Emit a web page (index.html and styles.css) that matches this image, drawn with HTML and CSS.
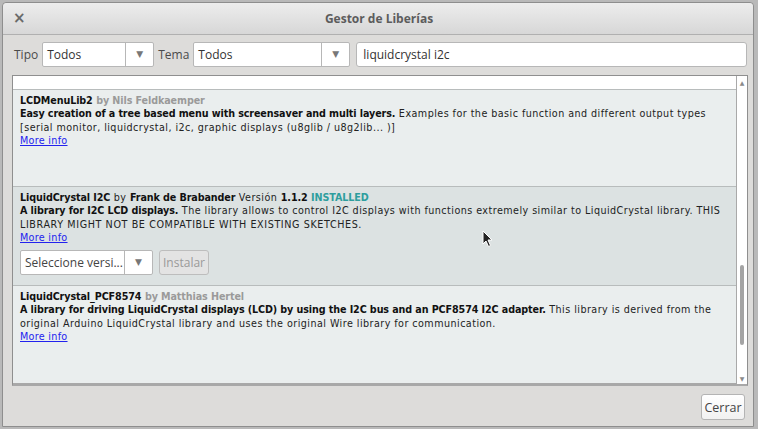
FILE: index.html
```html
<!DOCTYPE html>
<html lang="es">
<head>
<meta charset="utf-8">
<title>Gestor de Liberías</title>
<link rel="stylesheet" href="styles.css">
</head>
<body>
<div class="window">
  <div class="titlebar">
    <span class="close">×</span>
    <span class="title">Gestor de Liberías</span>
  </div>
  <div class="filters">
    <span class="label">Tipo</span>
    <div class="combo combo-tipo"><span class="combo-text">Todos</span><span class="combo-arrow">▼</span></div>
    <span class="label">Tema</span>
    <div class="combo combo-tema"><span class="combo-text">Todos</span><span class="combo-arrow">▼</span></div>
    <div class="search">liquidcrystal i2c</div>
  </div>
  <div class="panel">
    <div class="items">
      <div class="item item-partial"></div>
      <div class="item">
        <div class="line"><b>LCDMenuLib2</b> <b class="muted">by Nils Feldkaemper</b></div>
        <div class="line"><b>Easy creation of a tree based menu with screensaver and multi layers.</b> Examples for the basic function and different output types</div>
        <div class="line">[serial monitor, liquidcrystal, i2c, graphic displays (u8glib / u8g2lib... )]</div>
        <div class="line"><a class="more" href="#">More info</a></div>
      </div>
      <div class="item item-selected">
        <div class="line"><b>LiquidCrystal I2C</b> by <b>Frank de Brabander</b> Versión <b>1.1.2</b> <b class="installed">INSTALLED</b></div>
        <div class="line"><b>A library for I2C LCD displays.</b> The library allows to control I2C displays with functions extremely similar to LiquidCrystal library. THIS</div>
        <div class="line line-caps">LIBRARY MIGHT NOT BE COMPATIBLE WITH EXISTING SKETCHES.</div>
        <div class="line"><a class="more" href="#">More info</a></div>
        <div class="actions">
          <div class="combo combo-version"><span class="combo-text">Seleccione versi...</span><span class="combo-arrow">▼</span></div>
          <div class="btn btn-disabled">Instalar</div>
        </div>
      </div>
      <div class="item item-last">
        <div class="line"><b>LiquidCrystal_PCF8574</b> <b class="muted">by Matthias Hertel</b></div>
        <div class="line"><b>A library for driving LiquidCrystal displays (LCD) by using the I2C bus and an PCF8574 I2C adapter.</b> This library is derived from the</div>
        <div class="line">original Arduino LiquidCrystal library and uses the original Wire library for communication.</div>
        <div class="line"><a class="more" href="#">More info</a></div>
      </div>
    </div>
    <div class="scrollbar">
      <span class="sb-arrow">▲</span>
      <div class="sb-track"><div class="sb-thumb"></div></div>
      <span class="sb-arrow">▼</span>
    </div>
    <svg class="cursor" width="12" height="18" viewBox="0 0 12 18"><path d="M1 1 L1 14 L4 11 L6.5 16.5 L8.5 15.5 L6 10 L10 10 Z" fill="#222" stroke="#fff" stroke-width="1"/></svg>
  </div>
  <div class="footer">
    <div class="btn btn-close">Cerrar</div>
  </div>
</div>
</body>
</html>
```
FILE: styles.css
```css
* { box-sizing: border-box; }
html, body { margin: 0; padding: 0; }
body {
  width: 758px;
  height: 429px;
  background: #b9b9b9;
  font-family: "Open Sans", "DejaVu Sans", sans-serif;
  overflow: hidden;
}
.window {
  margin: 2px 0 0 2px;
  width: 752px;
  height: 425px;
  background: #dddcda;
  border: 1px solid #8e8e8e;
  border-radius: 4px 4px 0 0;
  display: flex;
  flex-direction: column;
  position: relative;
}
.titlebar {
  height: 32px;
  flex: none;
  background: linear-gradient(#ededed, #d7d7d7);
  border-bottom: 1px solid #b0b0b0;
  border-radius: 4px 4px 0 0;
  display: flex;
  align-items: center;
  justify-content: center;
  position: relative;
}
.close {
  position: absolute;
  left: 10px;
  top: 6px;
  font-size: 15px;
  font-weight: bold;
  color: #6a6a6a;
  font-family: "DejaVu Sans", sans-serif;
}
.title {
  font-size: 12px;
  font-weight: bold;
  color: #5c5c5c;
  margin-left: 2px;
}
.filters {
  display: flex;
  align-items: center;
  padding: 6px 6px 0 11px;
  height: 32px;
  flex: none;
}
.label {
  font-size: 12px;
  color: #4b4b4b;
  margin-right: 4px;
}
.combo {
  display: flex;
  height: 25px;
  background: #fff;
  border: 1px solid #b7b7b7;
  border-radius: 2px;
  font-size: 12px;
  color: #333;
}
.combo-text {
  flex: 1;
  padding-left: 4px;
  display: flex;
  align-items: center;
  border-right: 1px solid #b7b7b7;
}
.combo-arrow {
  width: 27px;
  display: flex;
  align-items: center;
  justify-content: center;
  font-size: 9px;
  color: #777;
  font-family: "DejaVu Sans", sans-serif;
}
.combo-tipo { width: 112px; margin-right: 4px; }
.combo-tema { width: 157px; margin-right: 6px; }
.search {
  flex: 1;
  height: 25px;
  background: #fff;
  border: 1px solid #b7b7b7;
  border-radius: 3px;
  font-size: 12px;
  color: #333;
  padding-left: 6px;
  display: flex;
  align-items: center;
}
.panel {
  margin: 8px 5px 0 9px;
  height: 311px;
  flex: none;
  border: 1px solid #8f8f8f;
  border-bottom: 2px solid #a8a8a8;
  display: flex;
  background: #fff;
  position: relative;
}
.items {
  flex: 1;
  display: flex;
  flex-direction: column;
  overflow: hidden;
  border-right: 1px solid #a9a9a9;
}
.item {
  background: #eaeeee;
  border-bottom: 1px solid #b8bcbc;
  padding: 4px 0 0 7px;
  font-family: "DejaVu Sans", sans-serif;
  font-size: 9.6px;
  color: #222;
  height: 97px;
  flex: none;
}
.item-partial {
  background: #fff;
  height: 14px;
  padding: 0;
}
.item-selected { background: #dce2e2; height: 99px; }
.item-last { height: 98px; border-bottom: 1px solid #a9a9a9; }
.line {
  height: 13.4px;
  line-height: 13.4px;
  white-space: nowrap;
  letter-spacing: 0.45px;
}
.line-caps { letter-spacing: 0.6px; }
.line b { color: #111; letter-spacing: -0.1px; }
.line b.muted { color: #9a9a9a; }
.line b.installed { color: #2e9e9e; }
.more {
  color: #2222ee;
  text-decoration: underline;
  letter-spacing: 0.3px;
}
.actions {
  display: flex;
  align-items: center;
  margin-top: 5px;
}
.combo-version { width: 133px; margin-right: 6px; background: #fff; letter-spacing: 0; }
.combo-version .combo-text { color: #444; font-family: "Open Sans", sans-serif; font-size: 12px; }
.btn {
  font-family: "Open Sans", sans-serif;
  font-size: 12px;
  border: 1px solid #bdbdbd;
  border-radius: 3px;
  display: flex;
  align-items: center;
  justify-content: center;
}
.btn-disabled {
  width: 50px;
  height: 25px;
  color: #9a9a9a;
  background: #e3e3e3;
}
.scrollbar {
  width: 10px;
  flex: none;
  background: #fff;
  display: flex;
  flex-direction: column;
  align-items: center;
}
.sb-arrow {
  font-size: 6px;
  color: #8a8a8a;
  height: 10px;
  line-height: 10px;
  font-family: "DejaVu Sans", sans-serif;
}
.sb-arrow:first-child { margin-top: 2px; }
.sb-track {
  flex: 1;
  width: 100%;
  position: relative;
}
.sb-thumb {
  position: absolute;
  left: 3px;
  width: 4px;
  top: 177px;
  height: 80px;
  background: #a4a4a4;
  border-radius: 2px;
}
.cursor {
  position: absolute;
  left: 469px;
  top: 154px;
}
.footer {
  flex: 1;
  display: flex;
  justify-content: flex-end;
  align-items: flex-start;
  padding: 8px 8px 0 0;
}
.btn-close {
  width: 44px;
  height: 26px;
  color: #444;
  background: linear-gradient(#ffffff, #f1f1f1);
  border-color: #b4b4b4;
  font-size: 12.5px;
}
```
